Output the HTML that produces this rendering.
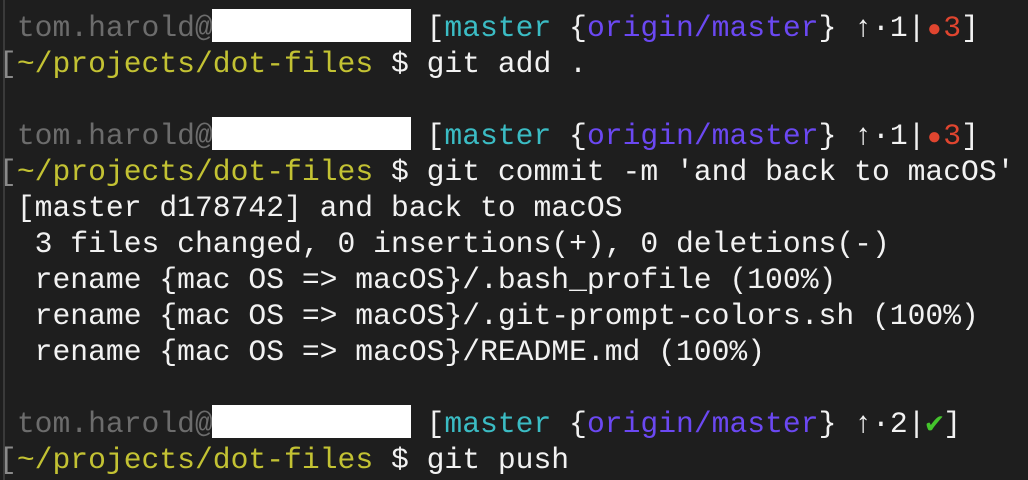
<!DOCTYPE html><html><head><style>
body{margin:0;background:#1e1e1e;width:1028px;height:480px;overflow:hidden;position:relative}
.t{position:absolute;left:-1px;top:10px;font-family:"Liberation Mono","DejaVu Sans Mono",monospace;font-size:29.7px;color:#f2f2f2}
.t div{height:36px;line-height:36px;white-space:pre;overflow:visible}
.g{color:#6c6c6c}.y{color:#c3c233}.c{color:#3bbcc4}.p{color:#6b48f2}.r{color:#e0452f}.k{color:#44c42c;font-weight:bold}.b{color:#8a8a8a}
.w{display:inline-block;width:17.82px;text-align:center;line-height:20px}
.dot{font-size:24px}
.box{position:absolute;background:#fff;left:212px;width:199px;height:33px}
.lb{position:absolute;left:3px;top:0;width:2px;height:480px;background:#3a3a3a}
</style></head><body>
<div class="lb"></div>
<div class="t">
<div><span class="g"> tom.harold@</span>            [<span class="c">master</span> {<span class="p">origin/master</span>} <span class="w">↑</span>·1|<span class="r"><span class="w dot">●</span>3</span>]</div>
<div><span class="b">[</span><span class="y">~/projects/dot-files</span> $ git add .</div>
<div> </div>
<div><span class="g"> tom.harold@</span>            [<span class="c">master</span> {<span class="p">origin/master</span>} <span class="w">↑</span>·1|<span class="r"><span class="w dot">●</span>3</span>]</div>
<div><span class="b">[</span><span class="y">~/projects/dot-files</span> $ git commit -m 'and back to macOS'</div>
<div> [master d178742] and back to macOS</div>
<div>  3 files changed, 0 insertions(+), 0 deletions(-)</div>
<div>  rename {mac OS =&gt; macOS}/.bash_profile (100%)</div>
<div>  rename {mac OS =&gt; macOS}/.git-prompt-colors.sh (100%)</div>
<div>  rename {mac OS =&gt; macOS}/README.md (100%)</div>
<div> </div>
<div><span class="g"> tom.harold@</span>            [<span class="c">master</span> {<span class="p">origin/master</span>} <span class="w">↑</span>·2|<span class="k w">✔</span>]</div>
<div><span class="b">[</span><span class="y">~/projects/dot-files</span> $ git push</div>
</div>
<div class="box" style="top:9px"></div>
<div class="box" style="top:117px"></div>
<div class="box" style="top:405px"></div>
</body></html>
